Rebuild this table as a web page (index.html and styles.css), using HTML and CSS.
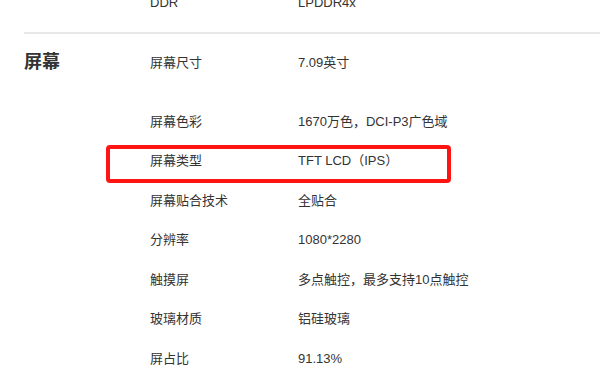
FILE: index.html
```html
<!DOCTYPE html>
<html lang="zh-CN">
<head>
<meta charset="utf-8">
<title>屏幕参数</title>
<link rel="stylesheet" href="styles.css">
</head>
<body>
<div class="page">
  <section class="group prev">
    <h2 class="group-title"></h2>
    <div class="rows">
      <div class="row"><span class="label">DDR</span><span class="value">LPDDR4x</span></div>
    </div>
  </section>
  <section class="group screen">
    <h2 class="group-title">屏幕</h2>
    <div class="rows">
      <div class="row tall"><span class="label">屏幕尺寸</span><span class="value">7.09英寸</span></div>
      <div class="row"><span class="label">屏幕色彩</span><span class="value">1670万色，DCI-P3广色域</span></div>
      <div class="row marked"><span class="label">屏幕类型</span><span class="value">TFT LCD（IPS）</span><span class="highlight"></span></div>
      <div class="row"><span class="label">屏幕贴合技术</span><span class="value">全贴合</span></div>
      <div class="row"><span class="label">分辨率</span><span class="value">1080*2280</span></div>
      <div class="row"><span class="label">触摸屏</span><span class="value">多点触控，最多支持10点触控</span></div>
      <div class="row"><span class="label">玻璃材质</span><span class="value">铝硅玻璃</span></div>
      <div class="row"><span class="label">屏占比</span><span class="value">91.13%</span></div>
    </div>
  </section>
</div>
</body>
</html>
```
FILE: styles.css
```css
html, body {
  margin: 0;
  padding: 0;
  background: #ffffff;
}
body {
  font-family: "Liberation Sans", "Noto Sans CJK SC", sans-serif;
  font-size: 13px;
  color: #333333;
  overflow: hidden;
}
.page {
  margin-top: -17px;
  padding-left: 24px;
}
.group {
  display: grid;
  grid-template-columns: 126px 1fr;
}
.prev {
  padding-bottom: 9px;
  border-bottom: 2px solid #e8e8e8;
}
.screen {
  padding-top: 9px;
}
.group-title {
  margin: 0;
  font-size: 18px;
  font-weight: bold;
  line-height: 39.5px;
  color: #333333;
}
.rows {
  display: flex;
  flex-direction: column;
}
.row {
  display: flex;
  height: 39.5px;
  line-height: 39.5px;
  position: relative;
}
.row.tall {
  height: 59px;
}
.label {
  width: 148px;
  flex: none;
}
.value {
  flex: 1;
}
.highlight {
  position: absolute;
  left: -44px;
  top: 3.5px;
  width: 345px;
  height: 38px;
  box-sizing: border-box;
  border: 4px solid #ff1414;
  border-radius: 4px;
}
```
